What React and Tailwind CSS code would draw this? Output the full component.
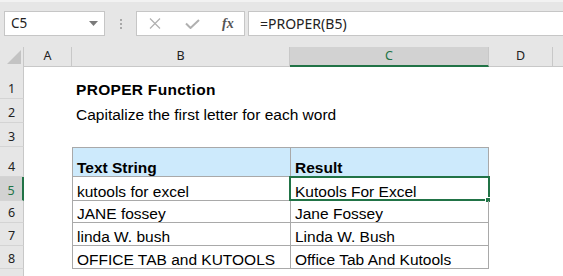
import React from 'react'

const green = 'border-[#217346]'

const cols = [
  { key: 'A', w: 'w-[48px]' },
  { key: 'B', w: 'w-[218px]' },
  { key: 'C', w: 'w-[199px]', active: true },
  { key: 'D', w: 'w-[64px]' }
]

function Corner () {
  return (
    <div className="w-[24px] h-full border-r border-[#c8c8c8] relative shrink-0">
      <svg className="absolute right-[2px] bottom-[3px]" width="14" height="14" viewBox="0 0 14 14">
        <polygon points="14,0 14,14 0,14" fill="#c3c3c3" />
      </svg>
    </div>
  )
}

function ColumnHeader () {
  return (
    <div className="h-[20px] flex bg-[#e6e6e6] font-['Noto_Sans',sans-serif] text-[12.5px]">
      <Corner />
      {cols.map(c => (
        <div
          key={c.key}
          className={`${c.w} shrink-0 flex items-center justify-center border-r border-[#c8c8c8]
            ${c.active ? 'bg-[#d2d2d2] border-b-2 border-b-[#217346] text-[#217346]' : 'border-b border-b-[#c8c8c8] text-[#222]'}`}
        >
          <span className="leading-none">{c.key}</span>
        </div>
      ))}
      <div className="flex-1 border-b border-[#c8c8c8]" />
    </div>
  )
}

function Row ({ num, h, active, table, top, b, c, pb = 'pb-0' }) {
  const line = 'border-[#a9a9a9]'
  return (
    <div className={`flex ${h}`}>
      <div
        className={`w-[24px] shrink-0 flex items-end justify-center pb-[3px] border-b border-[#d4d4d4]
          font-['Noto_Sans',sans-serif] text-[12.5px]
          ${active ? 'bg-[#d2d2d2] border-r-2 border-r-[#217346] text-[#217346]' : 'bg-[#e6e6e6] border-r border-r-[#c8c8c8] text-[#222]'}`}
      >
        <span className="leading-none">{num}</span>
      </div>
      <div className="w-[48px] shrink-0" />
      <div
        className={`w-[218px] shrink-0 flex items-end pl-[4px] whitespace-nowrap ${pb}
          ${table ? `border-l border-b ${line} ${top ? 'border-t bg-[#cdeafc]' : ''}` : ''}`}
      >
        <span className="leading-[17px]">{b}</span>
      </div>
      <div
        className={`w-[199px] shrink-0 relative flex items-end pl-[4px] whitespace-nowrap ${pb}
          ${table ? `border-l border-r border-b ${line} ${top ? 'border-t bg-[#cdeafc]' : ''}` : ''}`}
      >
        <span className="leading-[17px]">{c}</span>
        {active && (
          <div className="absolute -left-[2px] -top-[1px] -right-[2px] -bottom-[1px]">
            <div className={`absolute inset-0 border-2 ${green}`} />
            <div className="absolute -right-[1px] -bottom-[2px] w-[6px] h-[6px] bg-[#217346] border border-white" />
          </div>
        )}
      </div>
      <div className="w-[64px] shrink-0" />
      <div className="flex-1" />
    </div>
  )
}

function Toolbar () {
  return (
    <div className="h-[47px] bg-[#e6e6e6] border-t-2 border-[#f2f2f2] flex items-start pt-[9px] pl-[4px]">
      <div className="w-[101px] h-[25px] bg-white border border-[#c6c6c6] flex items-center pl-[6px] pr-[6px]
        font-['Noto_Sans',sans-serif] text-[13.5px] text-[#222]">
        <span className="flex-1 leading-none">C5</span>
        <svg width="9" height="5" viewBox="0 0 9 5">
          <polygon points="0,0 9,0 4.5,5" fill="#7a7a7a" />
        </svg>
      </div>
      <div className="w-[31px] h-[25px] flex flex-col items-center justify-center gap-[2px]">
        <div className="w-[2px] h-[2px] bg-[#a8a8a8]" />
        <div className="w-[2px] h-[2px] bg-[#a8a8a8]" />
        <div className="w-[2px] h-[2px] bg-[#a8a8a8]" />
      </div>
      <div className="w-[109px] h-[25px] bg-white border border-[#c6c6c6] flex items-center">
        <svg className="ml-[12px]" width="12" height="11" viewBox="0 0 12 11">
          <path d="M1 0.5 L11 10.5 M11 0.5 L1 10.5" stroke="#b0b0b0" strokeWidth="1.2" fill="none" />
        </svg>
        <svg className="ml-[24px]" width="15" height="10" viewBox="0 0 15 10">
          <path d="M1 4.5 L5.5 9 L14 1" stroke="#b0b0b0" strokeWidth="2" fill="none" />
        </svg>
        <span className="ml-[22px] font-['Liberation_Serif',serif] italic font-bold text-[14px] text-[#555] leading-none">
          fx
        </span>
      </div>
      <div className="ml-[3px] flex-1 h-[25px] bg-white border border-[#c6c6c6] border-r-0 flex items-center pl-[11px]
        font-['Noto_Sans',sans-serif] text-[14px] text-[#222]">
        <span className="leading-none">=PROPER(B5)</span>
      </div>
    </div>
  )
}

export default function App () {
  return (
    <div className="w-[563px] h-[276px] overflow-hidden bg-white font-['Liberation_Sans',Arial,sans-serif] text-[15.5px] text-black">
      <Toolbar />
      <ColumnHeader />
      <Row num={1} h="h-[32px]" pb="pb-[1px]" b={<b className="tracking-[0.3px]">PROPER Function</b>} />
      <Row num={2} h="h-[24px]" b="Capitalize the first letter for each word" />
      <Row num={3} h="h-[24px]" />
      <Row num={4} h="h-[30px]" table top pb="pb-0" b={<b>Text String</b>} c={<b>Result</b>} />
      <Row num={5} h="h-[24px]" table active b="kutools for excel" c="Kutools For Excel" />
      <Row num={6} h="h-[22px]" table b="JANE fossey" c="Jane Fossey" />
      <Row num={7} h="h-[23px]" table b="linda W. bush" c="Linda W. Bush" />
      <Row num={8} h="h-[23px]" table b="OFFICE TAB and KUTOOLS" c="Office Tab And Kutools" />
      <Row num="" h="h-[30px]" />
    </div>
  )
}
